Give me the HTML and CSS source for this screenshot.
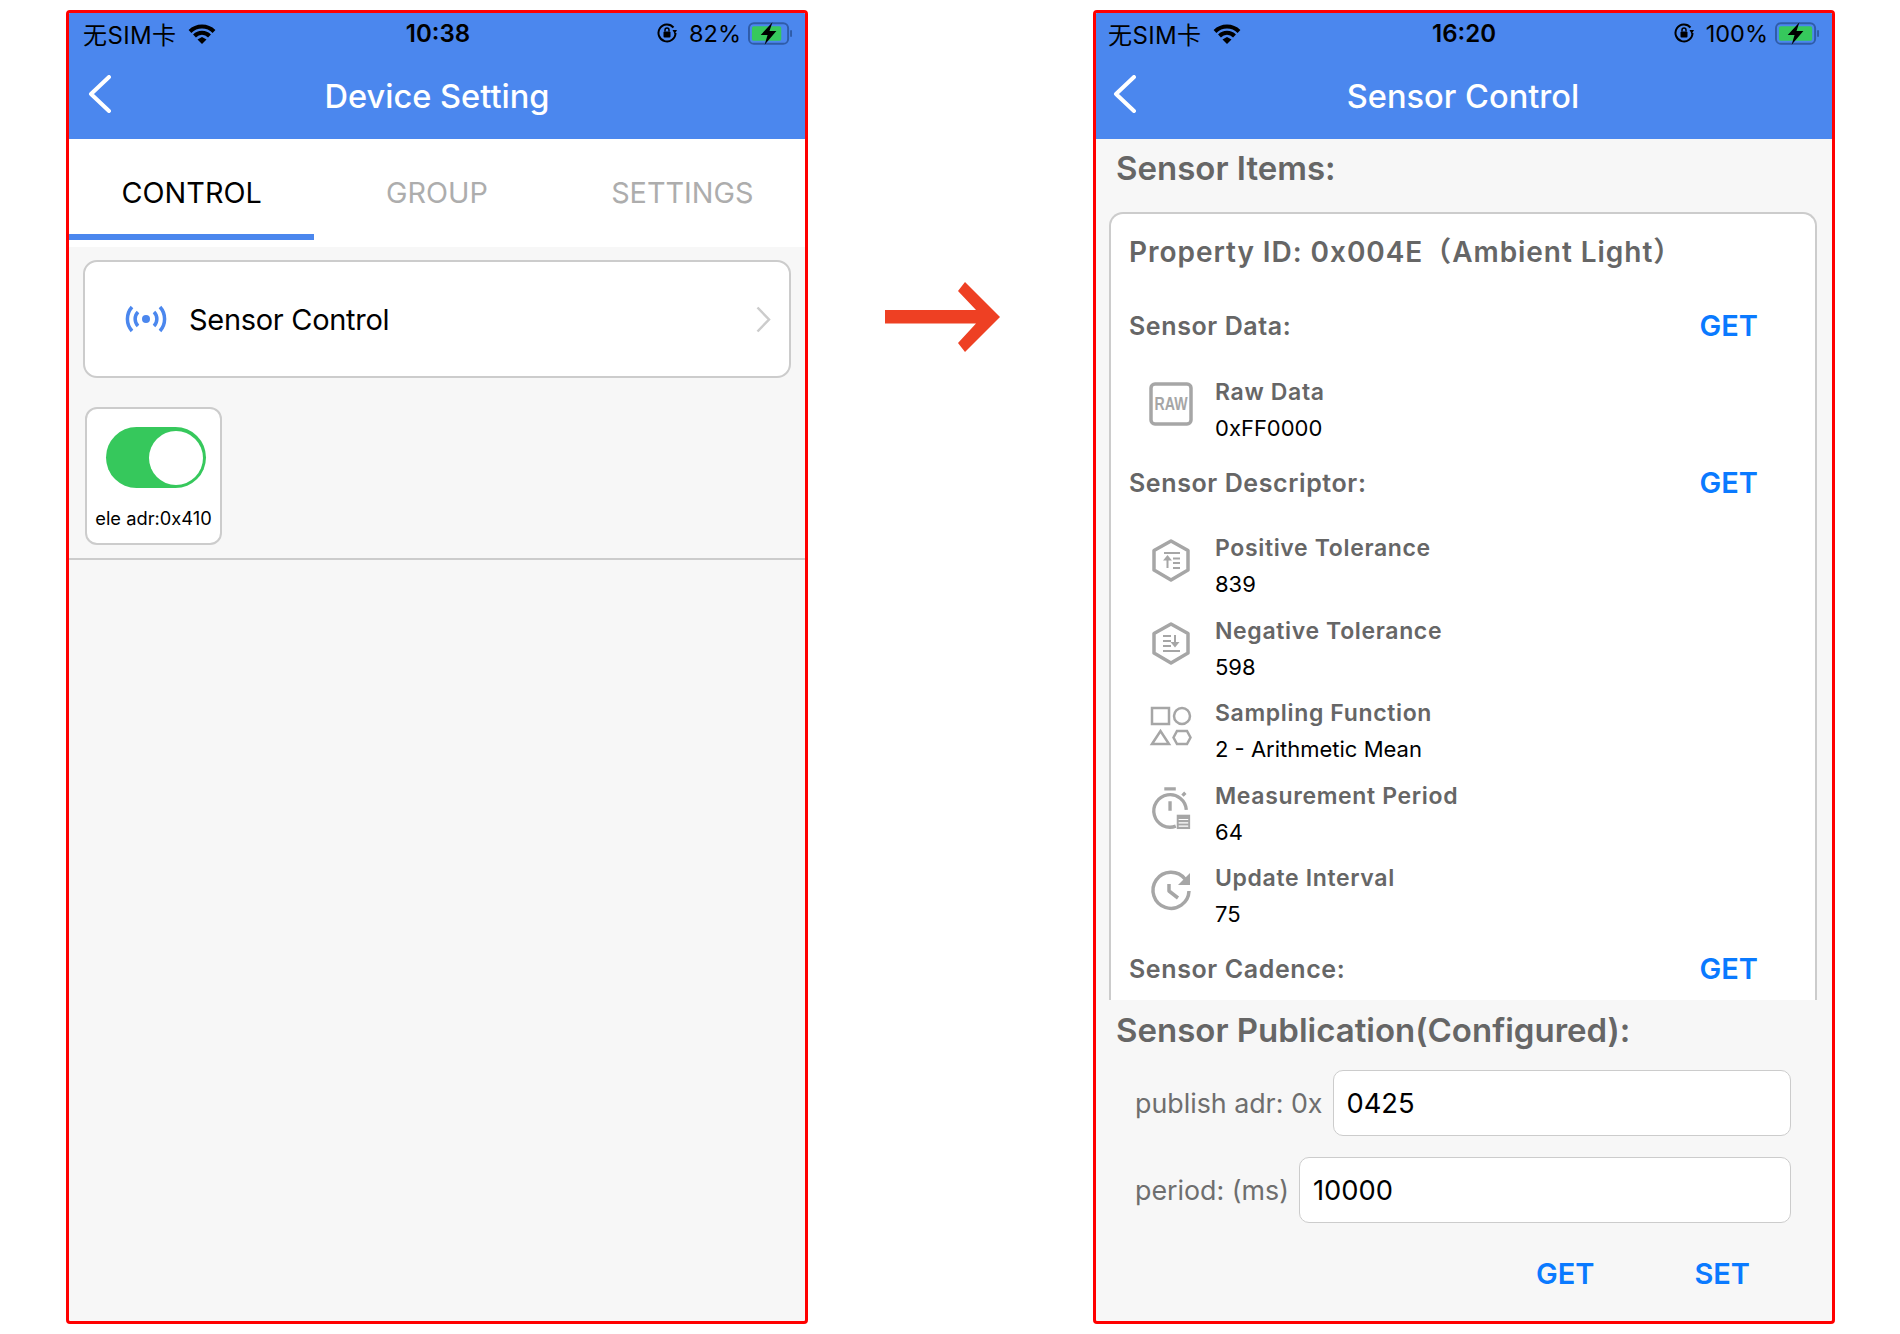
FILE: index.html
```html
<!DOCTYPE html>
<html lang="en">

<head>
    <meta charset="UTF-8">
    <title>Device Setting and Sensor Control</title>
    <link rel="stylesheet" href="styles.css">
</head>

<body>
    <!-- Left phone -->
    <div class="phone">
        <div class="status-bar">
            <div class="status-left">
                <span class="carrier">无SIM卡</span>
                <svg class="wifi" viewBox="0 0 30 21"><path d="M3 8.500 A17 17 0 0 1 27 8.500 M7.500 13 A10.500 10.500 0 0 1 22.500 13" /><polygon points="10.500,16.500 15,14 19.500,16.500 15,21" /></svg>
            </div>
            <div class="status-time">10:38</div>
            <div class="status-right">
                <svg class="rotate-lock" viewBox="0 0 20 22"><path d="M16.500 5.500 A8.500 8.500 0 1 0 18.500 11" /><polygon class="lock-arrow" points="15.500,8 20,8 17.700,12" /><rect class="lock-body" x="6.500" y="9.500" width="7" height="6" rx="1" /><path class="lock-loop" d="M8 9.500 V8 A2 2 0 0 1 12 8 V9.500" /></svg>
                <span class="battery-pct">82%</span>
                <svg class="battery" viewBox="0 0 46 23"><rect class="battery-shell" x="1" y="1" width="40" height="21" rx="5" /><rect class="battery-fill" x="4" y="4" width="30" height="15" rx="2" /><rect class="battery-nub" x="43" y="8" width="2" height="7" rx="1" /><path d="M25 0 L13 13 H20 L17 23 L29 9 H22Z" /></svg>
            </div>
        </div>
        <div class="nav-bar">
            <svg class="back" viewBox="0 0 24 38"><path d="M21 2 L3 19 L21 36" /></svg>
            <div class="nav-title">Device Setting</div>
            <div></div>
        </div>

        <div class="tabs">
            <div class="tab tab-active">CONTROL</div>
            <div class="tab">GROUP</div>
            <div class="tab">SETTINGS</div>
        </div>

        <div class="control-row">
            <svg class="broadcast" viewBox="0 0 42 28"><circle cx="21" cy="14" r="4" /><path d="M13 7 A10 10 0 0 0 13 21 M29 7 A10 10 0 0 1 29 21 M7 2 A18 18 0 0 0 7 26 M35 2 A18 18 0 0 1 35 26" /></svg>
            <span class="control-name">Sensor Control</span>
            <svg class="chevron" viewBox="0 0 15 27"><path d="M1.500 1.500 L13 13.500 L1.500 25.500" /></svg>
        </div>

        <div class="node-card">
            <div class="toggle"><div class="toggle-knob"></div></div>
            <div class="node-label">ele adr:0x410</div>
        </div>
        <div class="divider"></div>
    </div>

    <!-- Arrow between the phones -->
    <div class="arrow-col">
        <svg class="big-arrow" viewBox="0 0 115 70"><polygon points="0,28 91,28 73,9 80,0 115,35 80,70 73,61 91,41.500 0,41.500" /></svg>
    </div>

    <!-- Right phone -->
    <div class="phone phone-sensor">
        <div class="status-bar">
            <div class="status-left">
                <span class="carrier">无SIM卡</span>
                <svg class="wifi" viewBox="0 0 30 21"><path d="M3 8.500 A17 17 0 0 1 27 8.500 M7.500 13 A10.500 10.500 0 0 1 22.500 13" /><polygon points="10.500,16.500 15,14 19.500,16.500 15,21" /></svg>
            </div>
            <div class="status-time">16:20</div>
            <div class="status-right">
                <svg class="rotate-lock" viewBox="0 0 20 22"><path d="M16.500 5.500 A8.500 8.500 0 1 0 18.500 11" /><polygon class="lock-arrow" points="15.500,8 20,8 17.700,12" /><rect class="lock-body" x="6.500" y="9.500" width="7" height="6" rx="1" /><path class="lock-loop" d="M8 9.500 V8 A2 2 0 0 1 12 8 V9.500" /></svg>
                <span class="battery-pct">100%</span>
                <svg class="battery" viewBox="0 0 46 23"><rect class="battery-shell" x="1" y="1" width="40" height="21" rx="5" /><rect class="battery-fill" x="4" y="4" width="34" height="15" rx="2" /><rect class="battery-nub" x="43" y="8" width="2" height="7" rx="1" /><path d="M25 0 L13 13 H20 L17 23 L29 9 H22Z" /></svg>
            </div>
        </div>
        <div class="nav-bar">
            <svg class="back" viewBox="0 0 24 38"><path d="M21 2 L3 19 L21 36" /></svg>
            <div class="nav-title">Sensor Control</div>
            <div></div>
        </div>

        <div class="section-title">Sensor Items:</div>

        <div class="sensor-card">
            <div class="property-id">Property ID: 0x004E（Ambient Light）</div>

            <div class="sensor-head sensor-head-first">
                <span>Sensor Data:</span>
                <span class="action">GET</span>
            </div>
            <div class="sensor-item">
                <svg class="item-icon" viewBox="0 0 44 44"><rect class="line" x="2" y="2" width="40" height="40" rx="4" /><text class="raw-text" x="22" y="28" textLength="33" lengthAdjust="spacingAndGlyphs">RAW</text></svg>
                <div>
                    <div class="item-label">Raw Data</div>
                    <div class="item-value">0xFF0000</div>
                </div>
            </div>

            <div class="sensor-head">
                <span>Sensor Descriptor:</span>
                <span class="action">GET</span>
            </div>
            <div class="sensor-item">
                <svg class="item-icon" viewBox="0 0 44 44"><polygon class="line" points="22,3 39,12.500 39,32 22,42 5,32 5,12.500" /><path class="thin" d="M15 15 H31 M18.500 30 V19 M24 20.500 H31 M24 25 H31 M24 30 H31" /><polygon class="solid" points="14,22.500 18.500,17 23,22.500" /></svg>
                <div>
                    <div class="item-label">Positive Tolerance</div>
                    <div class="item-value">839</div>
                </div>
            </div>
            <div class="sensor-item">
                <svg class="item-icon" viewBox="0 0 44 44"><polygon class="line" points="22,3 39,12.500 39,32 22,42 5,32 5,12.500" /><path class="thin" d="M14 15 H22 M14 20 H22 M14 25 H22 M14 30 H31 M26 14 V23" /><polygon class="solid" points="21.500,21 30.500,21 26,26.500" /></svg>
                <div>
                    <div class="item-label">Negative Tolerance</div>
                    <div class="item-value">598</div>
                </div>
            </div>
            <div class="sensor-item">
                <svg class="item-icon" viewBox="0 0 44 44"><rect class="line-thin" x="3" y="5" width="17" height="16" /><circle class="line-thin" cx="33" cy="13" r="8" /><polygon class="line-thin" points="3,41 11.500,28 20,41" /><polygon class="line-thin" points="24.500,34.500 28,28 38,28 41.500,34.500 38,41 28,41" /></svg>
                <div>
                    <div class="item-label">Sampling Function</div>
                    <div class="item-value">2 - Arithmetic Mean</div>
                </div>
            </div>
            <div class="sensor-item">
                <svg class="item-icon" viewBox="0 0 44 46"><path class="line" d="M27 42 A17 17 0 1 1 38 25" /><path class="line" d="M15 3 H27 M21 16 V26 M34 10 L37 7" /><rect class="solid" x="28" y="30" width="14" height="15" /><path class="pad-lines" d="M30 35 H40 M30 38.500 H40 M30 42 H40" /></svg>
                <div>
                    <div class="item-label">Measurement Period</div>
                    <div class="item-value">64</div>
                </div>
            </div>
            <div class="sensor-item">
                <svg class="item-icon" viewBox="0 0 44 44"><path class="line" d="M36 11 A18 18 0 1 0 40 23" /><path class="line" d="M20 16 L20 23 L29 30" /><polygon class="solid" points="41,5 41,17 29,17" /></svg>
                <div>
                    <div class="item-label">Update Interval</div>
                    <div class="item-value">75</div>
                </div>
            </div>

            <div class="sensor-head sensor-head-last">
                <span>Sensor Cadence:</span>
                <span class="action">GET</span>
            </div>
        </div>

        <div class="section-title publication-title">Sensor Publication(Configured):</div>

        <div class="field-row">
            <span class="field-label">publish adr: 0x</span>
            <div class="field-input">0425</div>
        </div>
        <div class="field-row field-row-second">
            <span class="field-label">period: (ms)</span>
            <div class="field-input">10000</div>
        </div>

        <div class="actions-row">
            <span class="action">GET</span>
            <span class="action">SET</span>
        </div>
    </div>
</body>

</html>
```

FILE: styles.css
```css
body {
  margin: 0;
  padding: 10px 0 0 66px;
  display: flex;
  align-items: flex-start;
  background-color: #ffffff;
  font-family: Inter, "Noto Sans CJK SC", sans-serif;
  color: #000000;
}
.phone {
  box-sizing: border-box;
  width: 742px;
  height: 1314px;
  border: 3px solid #ff0000;
  border-radius: 4px;
  background-color: #f7f7f7;
  overflow: hidden;
  flex-shrink: 0;
}
.arrow-col {
  width: 285px;
  padding: 272px 0 0 77px;
  box-sizing: border-box;
  flex-shrink: 0;
}
.big-arrow {
  display: block;
  width: 115px;
  height: 70px;
  fill: #ee4023;
}

/* status + nav */
.status-bar {
  display: grid;
  grid-template-columns: 1fr auto 1fr;
  align-items: center;
  height: 40px;
  padding: 0 12px 0 14px;
  background-color: #4b87ee;
  font-size: 24px;
}
.phone-sensor .status-bar {
  padding-left: 12px;
}
.status-left,
.status-right {
  display: flex;
  align-items: center;
}
.status-right {
  justify-content: flex-end;
}
.carrier {
  font-size: 24px;
  letter-spacing: 0.4px;
}
.wifi {
  width: 30px;
  height: 21px;
  margin-left: 10px;
  fill: #000000;
}
.wifi path {
  fill: none;
  stroke: #000000;
  stroke-width: 4;
}
.status-time {
  font-weight: 600;
  font-size: 24px;
}
.rotate-lock {
  width: 20px;
  height: 22px;
  fill: none;
  stroke: #000000;
  stroke-width: 2;
}
.lock-arrow,
.lock-body {
  fill: #000000;
  stroke: none;
}
.lock-loop {
  stroke-width: 1.500;
}
.battery-pct {
  margin: 0 7px 0 12px;
  font-size: 23.500px;
}
.battery {
  width: 45px;
  height: 23px;
  fill: #000000;
}
.battery-shell {
  fill: none;
  stroke: #2f5ca8;
  stroke-width: 2;
}
.battery-fill {
  fill: #36c85c;
}
.battery-nub {
  fill: #2f5ca8;
}
.nav-bar {
  display: grid;
  grid-template-columns: 1fr auto 1fr;
  align-items: center;
  height: 86px;
  padding: 0 19px;
  background-color: #4b87ee;
}
.phone-sensor .nav-bar {
  padding-left: 17px;
}
.back {
  width: 24px;
  height: 38px;
  margin-bottom: 4px;
  fill: none;
  stroke: #ffffff;
  stroke-width: 4;
  stroke-linecap: round;
  stroke-linejoin: round;
}
.nav-title {
  color: #ffffff;
  font-size: 32.600px;
  font-weight: 500;
  line-height: 86px;
}

/* tabs */
.tabs {
  display: grid;
  grid-template-columns: repeat(3, 1fr);
  height: 108px;
  background-color: #ffffff;
}
.tab {
  box-sizing: border-box;
  height: 101px;
  padding-top: 11px;
  display: flex;
  justify-content: center;
  align-items: center;
  border-bottom: 6px solid transparent;
  color: #adadad;
  font-size: 28.800px;
}
.tab-active {
  color: #000000;
  border-bottom-color: #4b87ee;
}

/* left phone content */
.control-row {
  box-sizing: border-box;
  display: flex;
  align-items: center;
  height: 118px;
  margin: 13px 14px 0 14px;
  padding: 0 18px 0 40px;
  background-color: #ffffff;
  border: 2px solid #cccccc;
  border-radius: 14px;
}
.broadcast {
  width: 42px;
  height: 28px;
  fill: none;
  stroke: #4b87ee;
  stroke-width: 3.500;
}
.broadcast circle {
  fill: #4b87ee;
  stroke: none;
}
.control-name {
  flex: 1;
  margin-left: 22px;
  font-size: 29px;
  letter-spacing: -0.3px;
}
.chevron {
  width: 15px;
  height: 27px;
  fill: none;
  stroke: #cccccc;
  stroke-width: 2.500;
}
.node-card {
  box-sizing: border-box;
  width: 137px;
  height: 138px;
  margin: 29px 0 0 16px;
  padding-top: 18px;
  background-color: #ffffff;
  border: 2px solid #cccccc;
  border-radius: 12px;
}
.toggle {
  box-sizing: border-box;
  display: flex;
  justify-content: flex-end;
  align-items: center;
  width: 100px;
  height: 61px;
  margin-left: 19px;
  padding-right: 3px;
  background-color: #36c85c;
  border-radius: 31px;
}
.toggle-knob {
  width: 54px;
  height: 54px;
  border-radius: 50%;
  background-color: #ffffff;
}
.node-label {
  margin-top: 17px;
  text-align: center;
  font-size: 18.300px;
  line-height: 26px;
  white-space: nowrap;
}
.divider {
  height: 2px;
  margin-top: 13px;
  background-color: #cccccc;
}

/* right phone content */
.section-title {
  height: 56px;
  padding-left: 20px;
  color: #666666;
  font-size: 33px;
  font-weight: 600;
  line-height: 59px;
}
.sensor-card {
  box-sizing: border-box;
  height: 788px;
  margin: 17px 15px 0 13px;
  padding: 18px 0 0 18px;
  background-color: #ffffff;
  border: 2px solid #cccccc;
  border-bottom: none;
  border-radius: 14px 14px 0 0;
  overflow: hidden;
}
.property-id {
  height: 40px;
  color: #666666;
  font-size: 28px;
  font-weight: 600;
  letter-spacing: 0.95px;
  line-height: 40px;
  white-space: nowrap;
}
.sensor-head {
  display: flex;
  justify-content: space-between;
  align-items: center;
  height: 40px;
  margin: 7px 0 27px;
  padding-right: 57px;
  color: #666666;
  font-size: 25px;
  font-weight: 600;
  letter-spacing: 0.6px;
  line-height: 38px;
}
.sensor-head-first {
  margin-top: 34px;
  margin-bottom: 28px;
}
.sensor-head-last {
  margin-top: 7px;
  margin-bottom: 0;
}
.action {
  color: #0a7aff;
  font-size: 29px;
  font-weight: 600;
  letter-spacing: 0;
  line-height: 40px;
}
.sensor-item {
  display: flex;
  height: 82.400px;
  padding-left: 20px;
}
.item-icon {
  flex-shrink: 0;
  width: 44px;
  height: 44px;
  margin: 8px 22px 0 0;
  overflow: visible;
  fill: none;
}
.line {
  stroke: #a6a6a6;
  stroke-width: 3.500;
  stroke-linejoin: round;
}
.line-thin {
  stroke: #a6a6a6;
  stroke-width: 2.500;
}
.thin {
  stroke: #a6a6a6;
  stroke-width: 2;
}
.solid {
  fill: #a6a6a6;
}
.pad-lines {
  stroke: #ffffff;
  stroke-width: 1.200;
}
.raw-text {
  fill: #a6a6a6;
  font-size: 19px;
  font-weight: 700;
  font-family: "Liberation Sans", sans-serif;
  text-anchor: middle;
}
.item-label {
  color: #666666;
  font-size: 23px;
  font-weight: 600;
  letter-spacing: 0.65px;
  line-height: 36px;
}
.item-value {
  font-size: 22px;
  line-height: 36px;
}
.publication-title {
  margin-top: 1px;
}
.field-row {
  display: flex;
  align-items: center;
  gap: 10px;
  margin: 13px 41px 0 39px;
}
.field-row-second {
  margin-top: 21px;
}
.field-label {
  color: #6e6e6e;
  font-size: 26.800px;
  white-space: nowrap;
}
.field-input {
  box-sizing: border-box;
  flex: 1;
  height: 66px;
  padding-left: 13px;
  background-color: #ffffff;
  border: 1.500px solid #cccccc;
  border-radius: 10px;
  font-size: 27.300px;
  line-height: 65px;
}
.actions-row {
  display: flex;
  justify-content: flex-end;
  gap: 100px;
  margin-top: 31px;
  padding-right: 82px;
}
```
